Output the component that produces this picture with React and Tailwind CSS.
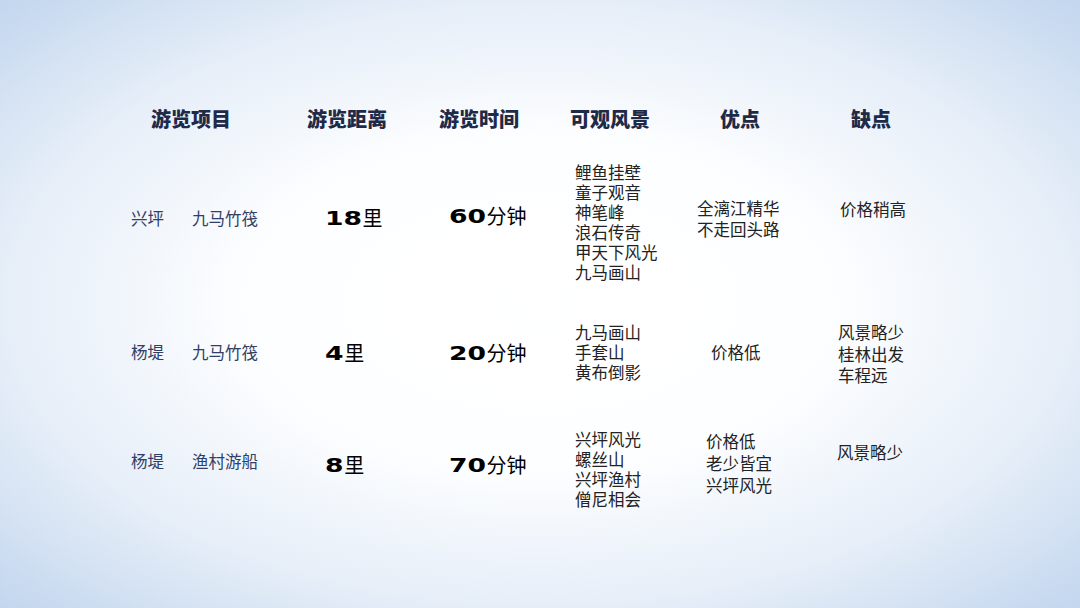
import React from 'react';

const cjk = { fontFamily: '"Noto Sans CJK SC", "Noto Sans", sans-serif' };
const num = { fontFamily: '"DejaVu Sans", "Noto Sans CJK SC", sans-serif' };

const headers = [
    { label: '游览项目', w: 'w-[156px]' },
    { label: '游览距离', w: 'w-[156px]' },
    { label: '游览时间', w: 'w-[108px]' },
    { label: '可观风景', w: 'w-[154px]' },
    { label: '优点', w: 'w-[106px]' },
    { label: '缺点', w: 'w-[156px]' },
];

const Num = ({ n, unit }) => (
    <span className="whitespace-nowrap text-[20px] leading-6 text-black flex items-center">
        <span style={num} className="font-black text-[19px] [transform:scaleX(1.4)] inline-block origin-left">{n}</span>
        <span style={cjk} className={n.length > 1 ? 'ml-[11px]' : 'ml-[6px]'}>{unit}</span>
    </span>
);

const Lines = ({ items, leading }) => (
    <div className={`text-[16.5px] text-[#222] ${leading}`}>
        {items.map((t) => (
            <div key={t}>{t}</div>
        ))}
    </div>
);

const App = () => {
    return (
        <div
            style={cjk}
            className="w-[1080px] h-[608px] overflow-hidden pt-[105px] bg-[radial-gradient(ellipse_at_center,#ffffff_0%,#fdfeff_38%,#e6eef8_70%,#c2d6ee_100%)]"
        >
            {/* header */}
            <div className="flex pl-[113px] h-7">
                {headers.map((h) => (
                    <div key={h.label} className={`${h.w} text-center text-[20px] leading-7 font-black text-[#1e2a48]`}>
                        {h.label}
                    </div>
                ))}
            </div>

            {/* row 1 */}
            <div className="flex pl-[131px] mt-[29px] h-[160px]">
                <div className="w-[194px] mt-[46px] flex text-[16.5px] leading-5 text-[#2f3f68]">
                    <span>兴坪</span>
                    <span className="ml-[28px]">九马竹筏</span>
                </div>
                <div className="w-[124px] mt-[44px]"><Num n="18" unit="里" /></div>
                <div className="w-[126px] mt-[42px]"><Num n="60" unit="分钟" /></div>
                <div className="w-[122px]">
                    <Lines leading="leading-5" items={['鲤鱼挂壁', '童子观音', '神笔峰', '浪石传奇', '甲天下风光', '九马画山']} />
                </div>
                <div className="w-[141px] mt-[36px]">
                    <Lines leading="leading-[21px]" items={['全漓江精华', '不走回头路']} />
                </div>
                <div className="mt-[37px] ml-[2px]">
                    <Lines leading="leading-[21px]" items={['价格稍高']} />
                </div>
            </div>

            {/* row 2 */}
            <div className="flex pl-[131px] h-[107px]">
                <div className="w-[194px] mt-[20px] flex text-[16.5px] leading-5 text-[#2f3f68]">
                    <span>杨堤</span>
                    <span className="ml-[28px]">九马竹筏</span>
                </div>
                <div className="w-[124px] mt-[19px]"><Num n="4" unit="里" /></div>
                <div className="w-[126px] mt-[19px]"><Num n="20" unit="分钟" /></div>
                <div className="w-[122px]">
                    <Lines leading="leading-5" items={['九马画山', '手套山', '黄布倒影']} />
                </div>
                <div className="w-[141px] mt-[20px] pl-[14px]">
                    <Lines leading="leading-[21px]" items={['价格低']} />
                </div>
                <div>
                    <Lines leading="leading-[21.5px]" items={['风景略少', '桂林出发', '车程远']} />
                </div>
            </div>

            {/* row 3 */}
            <div className="flex pl-[131px]">
                <div className="w-[194px] mt-[22px] flex text-[16.5px] leading-5 text-[#2f3f68]">
                    <span>杨堤</span>
                    <span className="ml-[28px]">渔村游船</span>
                </div>
                <div className="w-[124px] mt-[24px]"><Num n="8" unit="里" /></div>
                <div className="w-[126px] mt-[24px]"><Num n="70" unit="分钟" /></div>
                <div className="w-[122px]">
                    <Lines leading="leading-5" items={['兴坪风光', '螺丝山', '兴坪渔村', '僧尼相会']} />
                </div>
                <div className="w-[141px] mt-[1px] pl-[9px]">
                    <Lines leading="leading-[22px]" items={['价格低', '老少皆宜', '兴坪风光']} />
                </div>
                <div className="mt-[13px] -ml-[1px]">
                    <Lines leading="leading-[21px]" items={['风景略少']} />
                </div>
            </div>
        </div>
    );
};

export default App;
